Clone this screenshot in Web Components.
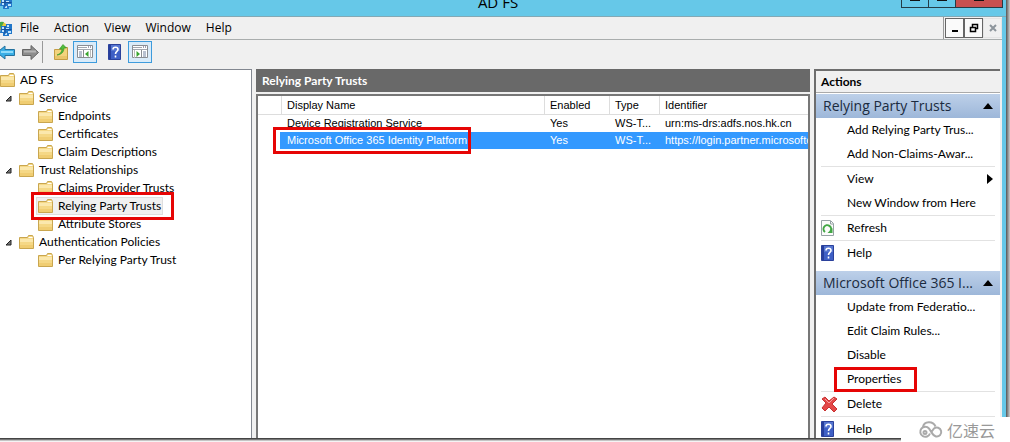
<!DOCTYPE html>
<html lang="en">
<head>
<meta charset="utf-8">
<title>AD FS</title>
<style>
html, body { margin: 0; height: 100%; overflow: hidden; background: #fff; }
body { font: 12px/18px Lato, "Noto Sans CJK SC", sans-serif; color: #000; --mark: #e60505; }
</style>
</head>
<body>
<mmc-window>
  <title-bar slot="title">AD FS</title-bar>
  <menu-bar slot="menu">
    <menu-entry>File</menu-entry><menu-entry>Action</menu-entry><menu-entry>View</menu-entry><menu-entry>Window</menu-entry><menu-entry>Help</menu-entry>
  </menu-bar>
  <tool-bar slot="tools"></tool-bar>
  <tree-view slot="tree">
    <tree-item level="0">AD FS</tree-item>
    <tree-item level="1">Service</tree-item>
    <tree-item level="2">Endpoints</tree-item>
    <tree-item level="2">Certificates</tree-item>
    <tree-item level="2">Claim Descriptions</tree-item>
    <tree-item level="1">Trust Relationships</tree-item>
    <tree-item level="2">Claims Provider Trusts</tree-item>
    <tree-item level="2" selected>Relying Party Trusts</tree-item>
    <tree-item level="2">Attribute Stores</tree-item>
    <tree-item level="1">Authentication Policies</tree-item>
    <tree-item level="2">Per Relying Party Trust</tree-item>
  </tree-view>
  <result-pane slot="main">Relying Party Trusts</result-pane>
  <actions-pane slot="actions">
    <action-group heading="Relying Party Trusts">
      <action-item>Add Relying Party Trus...</action-item>
      <action-item>Add Non-Claims-Awar...</action-item>
      <action-item divided submenu>View</action-item>
      <action-item>New Window from Here</action-item>
      <action-item divided icon="refresh">Refresh</action-item>
      <action-item divided icon="help">Help</action-item>
    </action-group>
    <action-group heading="Microsoft Office 365 I...">
      <action-item>Update from Federatio...</action-item>
      <action-item>Edit Claim Rules...</action-item>
      <action-item>Disable</action-item>
      <action-item marked>Properties</action-item>
      <action-item divided icon="delete">Delete</action-item>
      <action-item divided icon="help">Help</action-item>
    </action-group>
  </actions-pane>
</mmc-window>
<site-badge>亿速云</site-badge>

<script>
const ICONS = {
  folder: [15, 14, `<path d="M.5 2.5h8l1-2h4l1 2v11H.5z" fill="#f5d886" stroke="#c9a64f"/><path d="M9.5 2.5h4" stroke="#fff" /><path d="M1 4h13v3H1z" fill="#fbe8ad"/><path d="M1 10h13v3H1z" fill="#f0cd72"/>`],
  expand: [7, 7, `<path d="M6 1v5H1z" fill="#777" stroke="#222"/>`],
  app: [13, 15, `<path d="M-4 7a6 6 0 0 1 11-3L2 10z" fill="#e9c83c"/><path d="M-3 4a6 6 0 0 1 7-3L1 7z" fill="#45a848"/><path d="M1 5h5v-2h6v10H9v2H3v-3H0z" fill="#2277c9"/><path d="M2 7h2M7 5h2M6 8h3M2 10h2M8 11h3M5 13h2" stroke="#bfe4ff" stroke-width="2"/><path d="M5 5v8M1.500 8.500h10" stroke="#174f99"/>`],
  back: [15, 15, `<path d="M-3 7.500 5 1v3.500h9.500v6H5V14z" fill="#39aee6" stroke="#24719d"/><path d="M1 7h12" stroke="#8edbfa" stroke-width="2"/>`],
  forward: [17, 15, `<path d="M16.500 7.500 9 .500V4.500H.500v6H9v4z" fill="#8c8c8c" stroke="#666"/><path d="M2 6.500h12" stroke="#b5b5b5" stroke-width="2"/>`],
  up: [14, 16, `<path d="M.5 5.500h7l1-2h5v12H.5z" fill="#f3d37d" stroke="#c49d45"/><path d="M1 12h12v3H1z" fill="#eac56a"/><path d="M3 11c3-1 5-3 5-6H5.500L9 .500 12.500 4H10c0 4-3 7-7 7z" fill="#52bd3b" stroke="#2c8f25" stroke-width=".6"/>`],
  paneLeft: [17, 14, `<path d="M.5.5h15v12H.5z" fill="#fff" stroke="#8a8d92"/><path d="M1 2.500h9M1 4.500h14" stroke="#a2a7af"/><path d="M11 2h1M13 2h1" stroke="#446"/><path d="M6.500 5v8" stroke="#8a8d92"/><path d="M2 7h3M2 9h3M2 11h3" stroke="#7383a0"/><path d="M11.500 6v6L8 9z" fill="#39a52f"/><path d="M13.500 5v8" stroke="#bbb"/>`],
  paneRight: [17, 14, `<path d="M.5.5h15v12H.5z" fill="#fff" stroke="#8a8d92"/><path d="M1 2.500h9M1 4.500h14" stroke="#a2a7af"/><path d="M11 2h1M13 2h1" stroke="#446"/><path d="M9.500 5v8" stroke="#8a8d92"/><path d="M11 7h3M11 9h3M11 11h3" stroke="#7383a0"/><path d="M4.500 6v6L8 9z" fill="#39a52f"/><path d="M2.500 5v8" stroke="#bbb"/>`],
  help: [13, 16, `<path d="M.5.5h12v15H.5z" fill="#3e5fc5" stroke="#2b419b"/><path d="M1 1h2v14H1z" fill="#263e9d"/><path d="M3 1h9v6H3z" fill="#6583d7" opacity=".6"/><path d="M5 5.500C5 2.500 10 2.500 10 5.500 10 7.500 7.500 7.500 7.500 10M7.500 11.500v2" fill="none" stroke="#fff" stroke-width="1.600"/>`],
  refresh: [13, 16, `<path d="M.5.5h9l3 3v12H.5z" fill="#fbfbfb" stroke="#96a2a5"/><path d="M9.500 1v3h3" fill="none" stroke="#96a2a5"/><path d="M4 12A3.800 3.800 0 1 1 9.500 11" fill="none" stroke="#42a744" stroke-width="2"/><path d="M11.500 8v5H6.500z" fill="#42a744"/>`],
  delete: [17, 16, `<path d="M1 3 4 1l4 4 5-4 3 2-5 5 5 5-3 3-5-5-4 4-3-3 4-5z" fill="#e44848" stroke="#c93030"/><path d="M4 3l4 4 5-5" fill="none" stroke="#f6a0a0"/>`],
  collapse: [10, 6, `<path d="M5 0l5 6H0z" fill="#000"/>`],
  submenu: [6, 10, `<path d="M0 0l6 5-6 5z" fill="#000"/>`],
  min: [10, 10, `<path d="M2 8h6" stroke="#000" stroke-width="2"/>`],
  restore: [10, 10, `<path d="M3.500 4V1.500h5v4H7M3 1.500h6" fill="none" stroke="#000" stroke-width="1.500"/><path d="M1.500 4.500h5v4h-5zM1 4.500h6" fill="none" stroke="#000" stroke-width="1.500"/>`],
  close: [10, 10, `<path d="M2 2l6 6M8 2 2 8" stroke="#8d959c" stroke-width="2"/>`],
  cloud: [26, 18, `<g fill="none" stroke="#aaa" stroke-width="2"><path d="M12 12.500a5 5 0 1 1-1-5c2 2 3 7 7 8a4.500 4.500 0 1 0-2-8l-3 4"/><path d="M5 6C6 0 15-.5 17.500 5.500"/><circle cx="7" cy="11.500" r="1.500"/></g>`]
};
function define(name, html, setup) {
  const template = document.createElement("template");
  template.innerHTML = html;
  customElements.define(name, class extends HTMLElement {
    connectedCallback() {
      if (this.shadowRoot) return;
      this.attachShadow({ mode: "open" }).append(template.content.cloneNode(true));
      if (setup) setup(this, this.shadowRoot);
    }
  });
}
const RESET = "button{font:inherit;color:inherit;background:none;border:0;padding:0;margin:0;text-align:left;white-space:nowrap}";

define("ui-icon", `<style>:host{display:block;flex:none}svg{display:block}</style>`, (el, root) => {
  const [w, h, art] = ICONS[el.getAttribute("name")];
  root.innerHTML += `<svg width="${w}" height="${h}" viewBox="0 0 ${w} ${h}" aria-hidden="true">${art}</svg>`;
});

define("mmc-window", `<style>
:host{display:flex;flex-direction:column;box-sizing:border-box;height:100vh;padding:0 4px 4px 0;background:linear-gradient(to right,#555,#ccc) right/4px 100% no-repeat,linear-gradient(#444 0 1px,#777 1px 2px,#c4c4c4 2px 3px,#f4f4f4 3px) bottom/100% 4px no-repeat}
.frame{flex:1;min-height:0;display:flex;flex-direction:column;border-right:4px solid #66c8e8;background:#f0f0f0}
.body{flex:1;min-height:0;display:grid;grid-template-columns:252px minmax(0,1fr) 188px;grid-template-rows:minmax(0,1fr);column-gap:4px}
.title{margin-right:-4px}
</style><div class="frame"><div class="title"><slot name="title"></slot></div><slot name="menu"></slot><slot name="tools"></slot>
<div class="body"><slot name="tree"></slot><slot name="main"></slot><slot name="actions"></slot></div></div>`);

define("title-bar", `<style>${RESET}
:host{display:grid;grid-template-columns:1fr auto 1fr;grid-template-rows:16px;height:16px;background:#66c8e8;border-bottom:1px solid #83a9b5}
ui-icon{align-self:end;margin-bottom:7px}
.name{align-self:end;font-family:"Open Sans",sans-serif;font-size:15px;line-height:20px;padding-bottom:4px;margin-right:10px}
.caps{justify-self:end;display:flex;height:7px;margin-right:3px;border:solid #243c46;border-width:0 1px 1px}
.caps button{width:27px;display:flex;justify-content:center;border-right:1px solid #243c46}
.caps button:last-child{width:46px;background:#c75050;border:0}
.caps i{width:10px;height:1px;background:#111}
</style><ui-icon name="app"></ui-icon><div class="name"><slot></slot></div>
<div class="caps"><button aria-label="Minimize"><i></i></button><button aria-label="Maximize"><i></i></button><button aria-label="Close"><i></i></button></div>`);

define("menu-bar", `<style>${RESET}
:host{display:flex;align-items:center;height:22px;border-bottom:1px solid #a9adad;background:#f0f0f0;font:12px/18px "Open Sans",sans-serif}
nav{display:flex;gap:15px;flex:1;margin-left:7px}
.mdi{display:flex;border-left:1px solid #999;padding-left:1px;height:22px;align-items:center}
.mdi button{box-sizing:border-box;width:19px;height:20px;display:grid;place-items:center;border:1px solid #666;background:#fafafa}
.mdi button:last-child{border-color:#e4e4e4;background:#f0f0f0}
</style><ui-icon name="app"></ui-icon><nav><slot></slot></nav>
<div class="mdi"><button aria-label="Minimize child"><ui-icon name="min"></ui-icon></button><button aria-label="Restore child"><ui-icon name="restore"></ui-icon></button><button aria-label="Close child"><ui-icon name="close"></ui-icon></button></div>`);
define("menu-entry", `<style>${RESET}:host{display:block}</style><button><slot></slot></button>`);

define("tool-bar", `<style>${RESET}
:host{display:flex;align-items:flex-start;height:28px;padding-top:1px;background:#f0f0f0}
button{box-sizing:border-box;height:22px;display:grid;place-items:center}
.fwd{margin-left:7px}.sep{height:22px;border-left:1px solid #999;margin:0 11px 0 3px}
.on{width:24px;border:1px solid #3d9bdc;background:#d9ebf9;margin:0 11px 0 5px}
.last{margin-left:7px}
</style><button aria-label="Back"><ui-icon name="back"></ui-icon></button><button class="fwd" aria-label="Forward"><ui-icon name="forward"></ui-icon></button><div class="sep"></div>
<button aria-label="Up"><ui-icon name="up"></ui-icon></button><button class="on" aria-label="Console tree"><ui-icon name="paneLeft"></ui-icon></button>
<button aria-label="Help"><ui-icon name="help"></ui-icon></button><button class="on last" aria-label="Action pane"><ui-icon name="paneRight"></ui-icon></button>`);

define("tree-view", `<style>
:host{display:block;background:#fff;border:solid #828790;border-width:1px 1px 0 0;padding-top:1px;font-size:12px}
</style><div role="tree"><slot></slot></div>`);
define("tree-item", `<style>${RESET}
:host{display:flex;align-items:center;height:18px}
:host([level="1"]){padding-left:5px}:host([level="2"]){padding-left:36px}
.twist{display:none}:host([level="1"]) .twist{display:block;margin-right:7px}
button{display:flex;align-items:center;gap:5px;position:relative}
:host([level="2"]) button{padding:0 2px}
:host([selected]) button{background:#f0f0f0;outline:1px solid #dedede;outline-offset:-1px}
:host([selected]) button::after{content:"";position:absolute;z-index:1;inset:-5px -11px -5px -5px;border:3px solid var(--mark)}
</style><ui-icon class="twist" name="expand"></ui-icon><button role="treeitem"><ui-icon name="folder"></ui-icon><slot></slot></button>`);

define("result-pane", `<style>
:host{display:flex;flex-direction:column;min-width:0}
h2{margin:0 0 2px;background:#696969;color:#fff;font:bold 12px/23px Lato,sans-serif;padding-left:6px}
.list{flex:1;min-height:0;background:#fff;border:solid #777;border-width:2px 2px 0;overflow:hidden;font:11px/17px "Liberation Sans",sans-serif;color:#000}
table{border-collapse:separate;border-spacing:0;table-layout:fixed;width:100%}
th,td{padding:0 0 0 5px;font-weight:400;text-align:left;white-space:nowrap;overflow:hidden;height:17px}
th{border-right:1px solid #ddd;border-bottom:1px solid #ddd;padding-top:1px}
th:last-child{border-right:0}
.i{width:18px}.n{width:257px}.e{width:59px}.t{width:44px}
.sel td{background:#3399ff;color:#fff}
.sel td:first-child{background:linear-gradient(#39f,#39f) right/2px 100% no-repeat}
.sel td.pick{overflow:visible}
.pick span{position:relative}
.pick span::after{content:"";position:absolute;inset:-7px -4px -8px -14px;border:3px solid var(--mark)}
</style><h2><slot></slot></h2><div class="list"><table>
<thead><tr><th class="i"></th><th class="n">Display Name</th><th class="e">Enabled</th><th class="t">Type</th><th>Identifier</th></tr></thead>
<tbody><tr><td></td><td>Device Registration Service</td><td>Yes</td><td>WS-T...</td><td>urn:ms-drs:adfs.nos.hk.cn</td></tr>
<tr class="sel"><td></td><td class="pick"><span>Microsoft Office 365 Identity Platform</span></td><td>Yes</td><td>WS-T...</td><td>https://login.partner.microsoftc</td></tr></tbody></table></div>`);

define("actions-pane", `<style>
:host{display:flex;flex-direction:column;box-sizing:border-box;border:solid #6d6d6d;border-width:2px 0 0 2px;margin-right:2px;min-height:0;overflow:hidden;background:#fff}
h2{margin:0 0 1px;background:#f0f0f0;border-bottom:1px solid #aaa;font:bold 12px/21px Lato,sans-serif;padding-left:5px}
</style><h2>Actions</h2><slot></slot>`);
define("action-group", `<style>${RESET}
:host{display:block;margin-bottom:6px;flex:none}
button{box-sizing:border-box;width:100%;height:24px;display:flex;align-items:center;justify-content:space-between;padding:0 7px;font-family:"Open Sans",sans-serif;font-size:14px;color:#1b2b40;background:linear-gradient(#bdd0e9,#9db7d9)}
</style><button><span></span><ui-icon name="collapse"></ui-icon></button><slot></slot>`, (el, root) => {
  root.querySelector("span").textContent = el.getAttribute("heading");
});
define("action-item", `<style>${RESET}
:host{display:block;margin:0 5px;font-size:12px}
:host([divided]){border-top:1px solid #e2e2e2}
button{width:100%;height:24px;display:grid;grid-template-columns:26px 1fr auto;align-items:center}
.label{position:relative;justify-self:start}
.more{margin-right:2px}
:host([marked]) .label::after{content:"";position:absolute;inset:-3px -16px -4px -13px;border:3px solid var(--mark)}
</style><button><div class="ico"></div><span class="label"><slot></slot></span><div class="more"></div></button>`, (el, root) => {
  const icon = el.getAttribute("icon");
  if (icon) root.querySelector(".ico").innerHTML = `<ui-icon name="${icon}"></ui-icon>`;
  if (el.hasAttribute("submenu")) root.querySelector(".more").innerHTML = `<ui-icon name="submenu"></ui-icon>`;
});
define("site-badge", `<style>
:host{position:absolute;right:0;bottom:0;z-index:2;box-sizing:border-box;width:109px;height:25px;padding-left:17px;display:flex;align-items:center;gap:3px;background:#fff;color:#999;font:16px/24px "Noto Sans CJK SC",sans-serif;white-space:nowrap}
</style><ui-icon name="cloud"></ui-icon><slot></slot>`);
</script>
</body>
</html>
